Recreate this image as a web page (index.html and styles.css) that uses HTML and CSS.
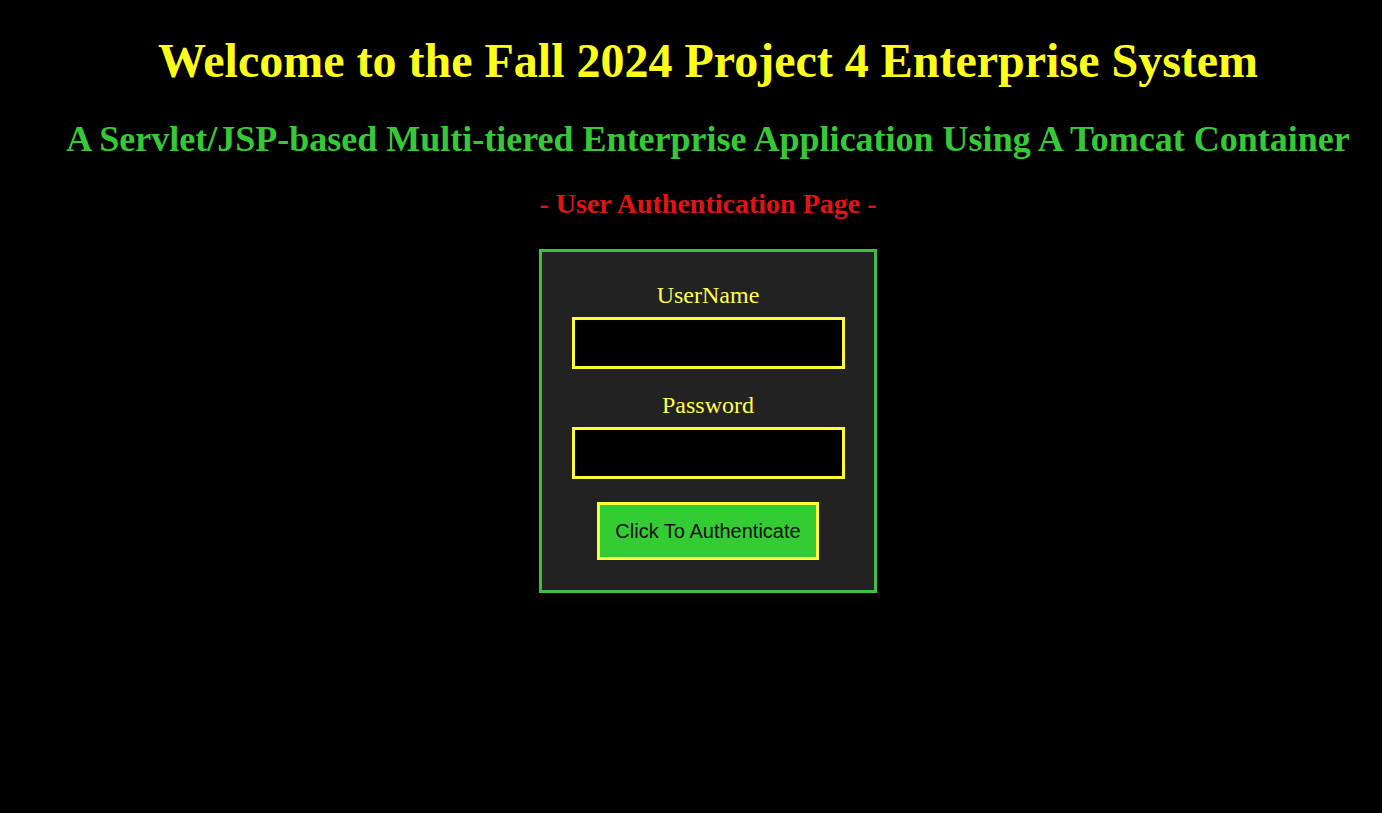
FILE: index.html
```html
<!DOCTYPE html>
<html>
<head>
<meta charset="utf-8">
<title>Project 4</title>
<link rel="stylesheet" href="styles.css">
</head>
<body>
<div class="page">
  <h1 class="title">Welcome to the Fall 2024 Project 4 Enterprise System</h1>
  <h2 class="subtitle">A Servlet/JSP-based Multi-tiered Enterprise Application Using A Tomcat Container</h2>
  <h3 class="pagename">- User Authentication Page -</h3>
  <form class="login">
    <label class="label" for="u">UserName</label>
    <input class="field" id="u" type="text">
    <label class="label" for="p">Password</label>
    <input class="field field-last" id="p" type="password">
    <button class="btn" type="button">Click To Authenticate</button>
  </form>
</div>
</body>
</html>
```
FILE: styles.css
```css
html, body {
  margin: 0;
  padding: 0;
  background: #000;
}
.page {
  padding-left: 34px;
  display: flex;
  flex-direction: column;
  align-items: center;
  font-family: "Liberation Serif", "Times New Roman", serif;
  text-align: center;
}
.title {
  margin: 33px 0 0;
  font-size: 48px;
  line-height: 56px;
  color: #ffff1a;
  font-weight: bold;
  white-space: nowrap;
}
.subtitle {
  margin: 29px 0 0;
  font-size: 36px;
  line-height: 42px;
  color: #36c936;
  font-weight: bold;
  white-space: nowrap;
}
.pagename {
  margin: 28px 0 0;
  font-size: 28px;
  line-height: 32px;
  color: #e01414;
  font-weight: bold;
}
.login {
  margin-top: 29px;
  width: 332px;
  box-sizing: content-box;
  border: 3px solid #3fbf3f;
  background: #222;
  display: flex;
  flex-direction: column;
  align-items: center;
  padding: 29px 0 30px;
}
.label {
  color: #ffff4d;
  font-size: 24px;
  line-height: 28px;
}
.field {
  margin: 8px 0 22px;
  width: 273px;
  height: 52px;
  box-sizing: border-box;
  border: 3px solid #ffff33;
  background: #000;
  color: #fff;
  outline: none;
  padding: 0 8px;
}
.field-last {
  margin-bottom: 23px;
}
.btn {
  width: 222px;
  height: 58px;
  box-sizing: border-box;
  border: 3px solid #ffff33;
  background: #33cc33;
  color: #111;
  font-family: "Liberation Sans", Arial, sans-serif;
  font-size: 20px;
  padding: 0;
  cursor: pointer;
}
```
